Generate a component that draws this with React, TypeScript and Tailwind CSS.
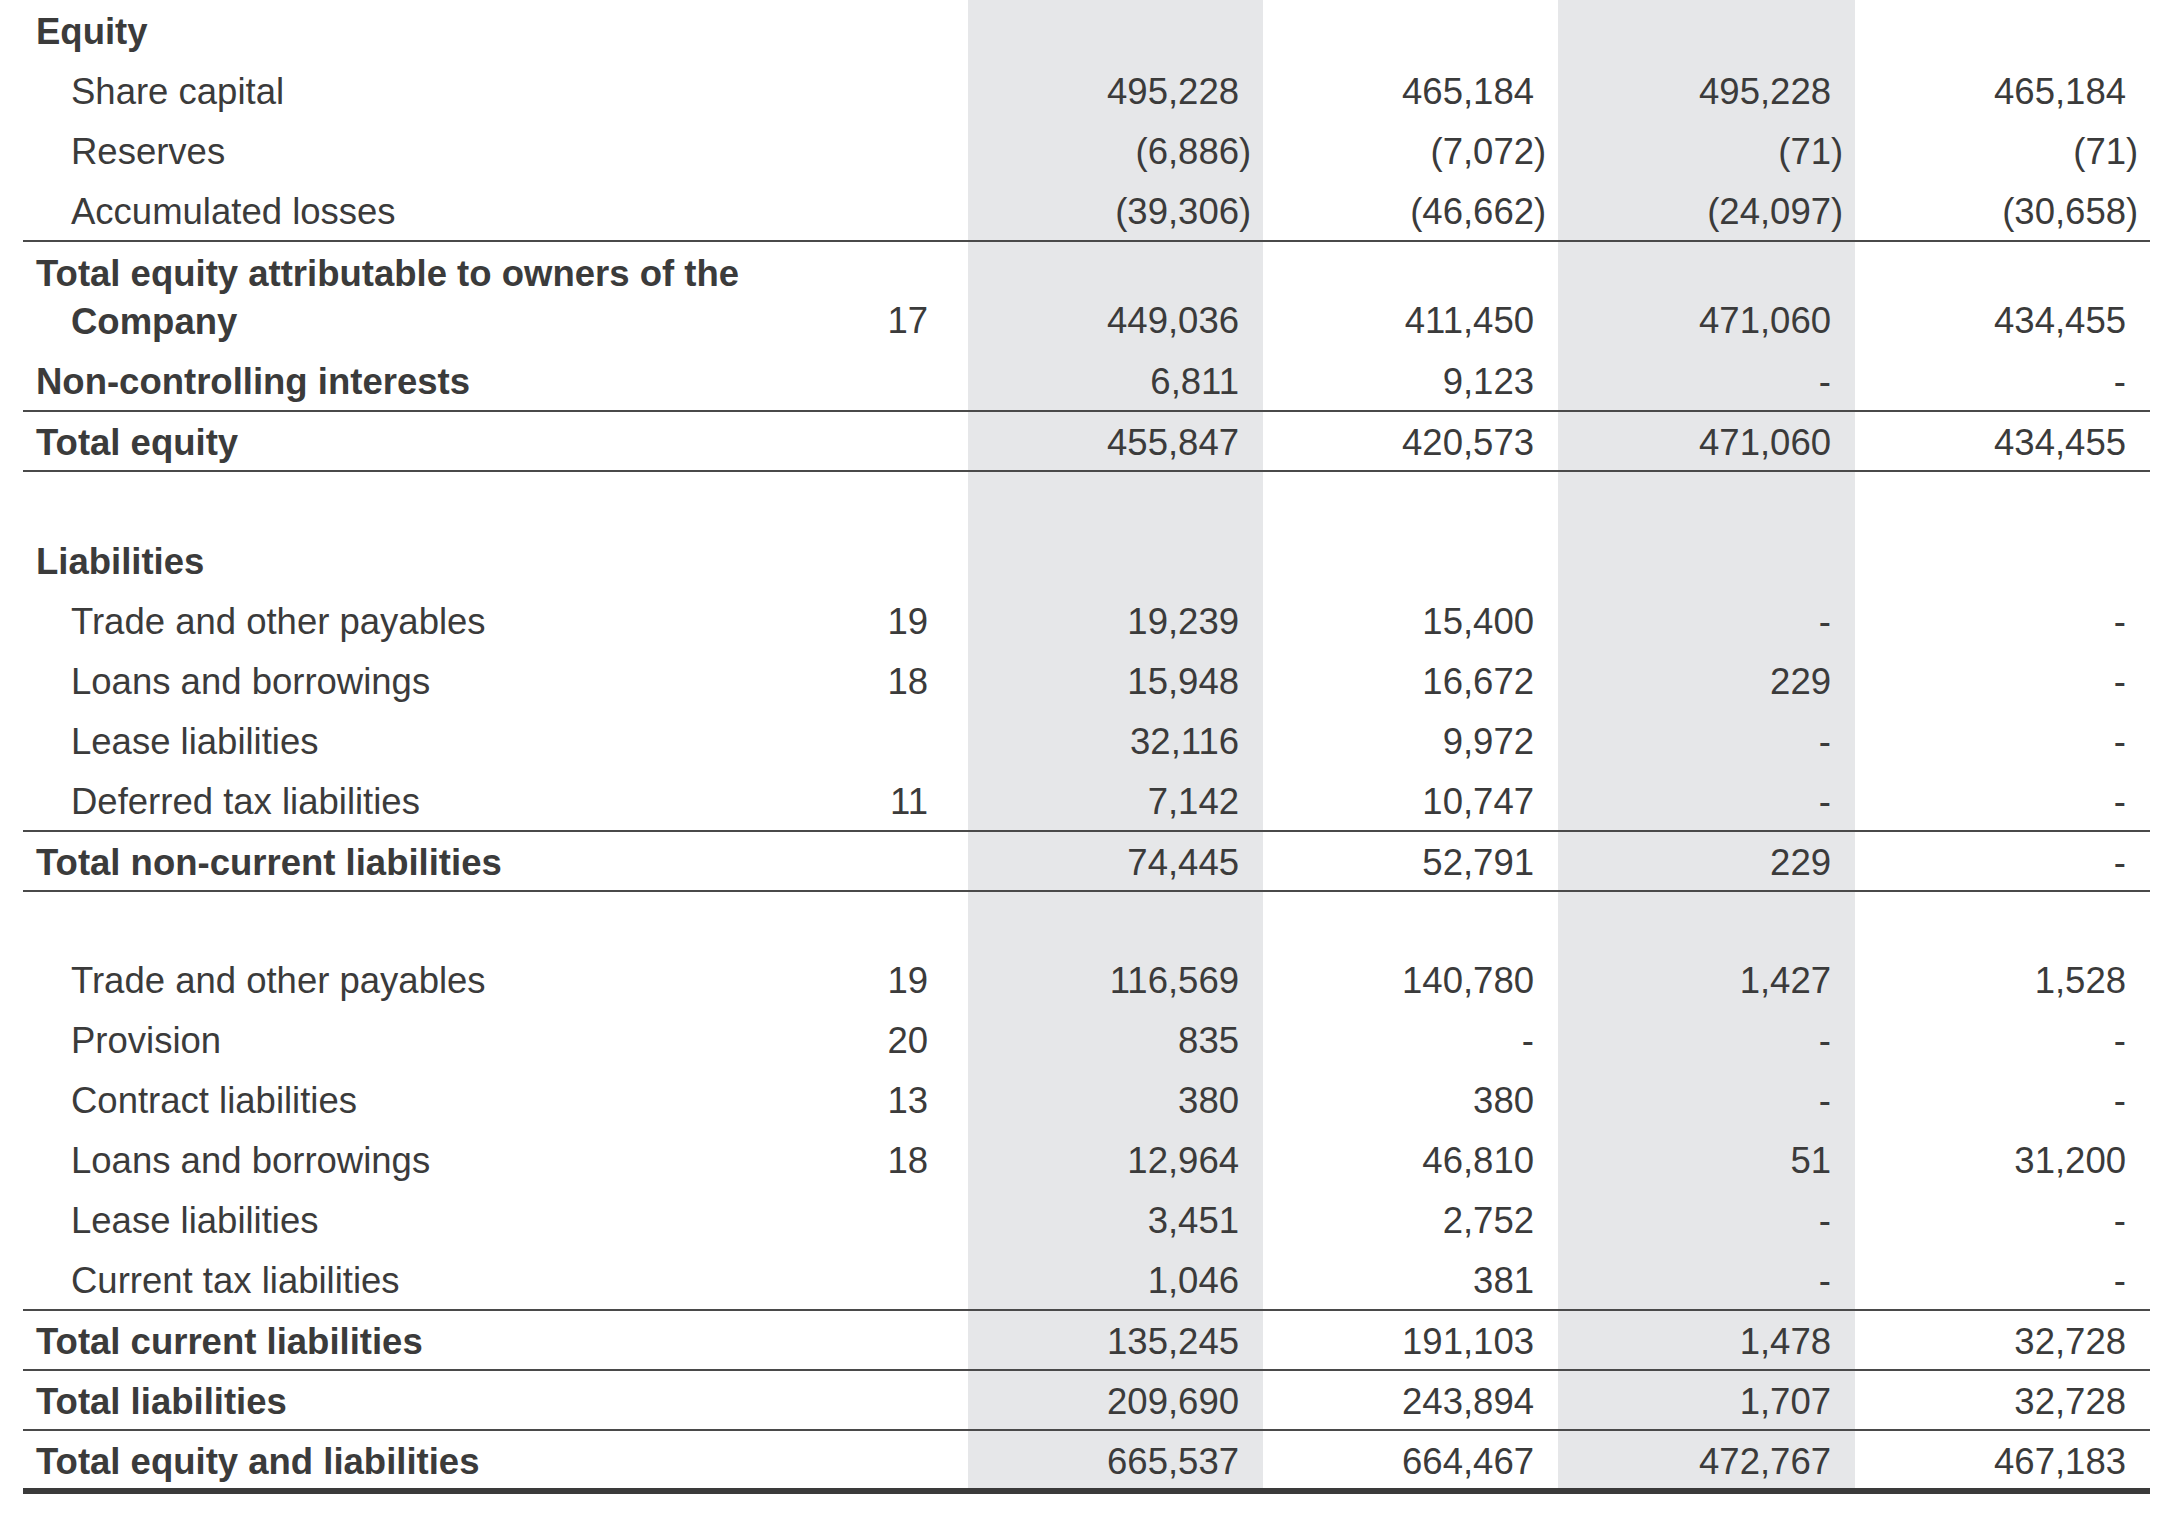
import React from "react";

type Row = {
  label?: string;
  label2?: string; // continuation line, hanging indent
  note?: string;
  values?: string[];
  bold?: boolean;
  indent?: boolean;
  kind?: "row" | "spacer";
  height: string;
  top?: boolean; // rule above the row
  last?: boolean;
};

const rows: Row[] = [
  { label: "Equity", bold: true, height: "h-[60px]" },
  { label: "Share capital", indent: true, values: ["495,228", "465,184", "495,228", "465,184"], height: "h-[60px]" },
  { label: "Reserves", indent: true, values: ["(6,886)", "(7,072)", "(71)", "(71)"], height: "h-[60px]" },
  { label: "Accumulated losses", indent: true, values: ["(39,306)", "(46,662)", "(24,097)", "(30,658)"], height: "h-[60px]" },
  {
    label: "Total equity attributable to owners of the",
    label2: "Company",
    note: "17",
    bold: true,
    top: true,
    values: ["449,036", "411,450", "471,060", "434,455"],
    height: "h-[110px]",
  },
  { label: "Non-controlling interests", bold: true, values: ["6,811", "9,123", "-", "-"], height: "h-[60px]" },
  { label: "Total equity", bold: true, top: true, values: ["455,847", "420,573", "471,060", "434,455"], height: "h-[60px]" },
  { kind: "spacer", top: true, height: "h-[60px]" },
  { label: "Liabilities", bold: true, height: "h-[60px]" },
  { label: "Trade and other payables", note: "19", indent: true, values: ["19,239", "15,400", "-", "-"], height: "h-[60px]" },
  { label: "Loans and borrowings", note: "18", indent: true, values: ["15,948", "16,672", "229", "-"], height: "h-[60px]" },
  { label: "Lease liabilities", indent: true, values: ["32,116", "9,972", "-", "-"], height: "h-[60px]" },
  { label: "Deferred tax liabilities", note: "11", indent: true, values: ["7,142", "10,747", "-", "-"], height: "h-[60px]" },
  { label: "Total non-current liabilities", bold: true, top: true, values: ["74,445", "52,791", "229", "-"], height: "h-[60px]" },
  { kind: "spacer", top: true, height: "h-[59px]" },
  { label: "Trade and other payables", note: "19", indent: true, values: ["116,569", "140,780", "1,427", "1,528"], height: "h-[60px]" },
  { label: "Provision", note: "20", indent: true, values: ["835", "-", "-", "-"], height: "h-[60px]" },
  { label: "Contract liabilities", note: "13", indent: true, values: ["380", "380", "-", "-"], height: "h-[60px]" },
  { label: "Loans and borrowings", note: "18", indent: true, values: ["12,964", "46,810", "51", "31,200"], height: "h-[60px]" },
  { label: "Lease liabilities", indent: true, values: ["3,451", "2,752", "-", "-"], height: "h-[60px]" },
  { label: "Current tax liabilities", indent: true, values: ["1,046", "381", "-", "-"], height: "h-[60px]" },
  { label: "Total current liabilities", bold: true, top: true, values: ["135,245", "191,103", "1,478", "32,728"], height: "h-[60px]" },
  { label: "Total liabilities", bold: true, top: true, values: ["209,690", "243,894", "1,707", "32,728"], height: "h-[60px]" },
  {
    label: "Total equity and liabilities",
    bold: true,
    top: true,
    last: true,
    values: ["665,537", "664,467", "472,767", "467,183"],
    height: "h-[65px]",
  },
];

// shaded columns are the 1st and 3rd figure columns
const shaded = [true, false, true, false];

// figures are right aligned, a closing bracket hangs past the digits
const Amount: React.FC<{ value: string }> = ({ value }) => {
  const negative = value.startsWith("(");
  return (
    <span className="whitespace-nowrap">
      {negative ? value.slice(0, -1) : value}
      <span className="inline-block w-[9px] text-left">{negative ? ")" : ""}</span>
    </span>
  );
};

const BalanceSheet: React.FC = () => {
  return (
    <div className="min-h-screen bg-white font-['Liberation_Sans',Arial,sans-serif] text-[36.5px] text-[#3b3b3b]">
      <div className="ml-[23px] w-[2127px]">
        {rows.map((row, i) => {
          const twoLine = !!row.label2;
          const cellAlign = twoLine ? "items-end pb-[5px]" : "items-center pt-[4px]";
          return (
            <div
              key={i}
              className={[
                "grid grid-cols-[1fr_120px_295px_295px_297px_295px]",
                row.height,
                row.top ? "border-t-2 border-[#4a4a4a]" : "",
                row.last ? "border-b-[6px] border-b-[#3a3a3a]" : "",
              ].join(" ")}
            >
              {/* label */}
              <div
                className={[
                  "flex flex-col justify-center leading-[48px]",
                  twoLine ? "pt-[3px]" : "pt-[4px]",
                  row.indent ? "pl-[48px]" : "pl-[13px]",
                  row.bold ? "font-bold" : "font-normal",
                ].join(" ")}
              >
                {row.label && <span className="whitespace-nowrap">{row.label}</span>}
                {row.label2 && <span className="whitespace-nowrap pl-[35px]">{row.label2}</span>}
              </div>

              {/* note */}
              <div className={`flex ${cellAlign} justify-end pr-[40px] leading-[48px]`}>
                {row.note}
              </div>

              {/* figures */}
              {shaded.map((isShaded, c) => (
                <div
                  key={c}
                  className={[
                    "flex justify-end pr-[15px] leading-[48px]",
                    cellAlign,
                    isShaded ? "bg-[#e6e7e9]" : "",
                  ].join(" ")}
                >
                  {row.values && <Amount value={row.values[c]} />}
                </div>
              ))}
            </div>
          );
        })}
      </div>
    </div>
  );
};

export default BalanceSheet;
